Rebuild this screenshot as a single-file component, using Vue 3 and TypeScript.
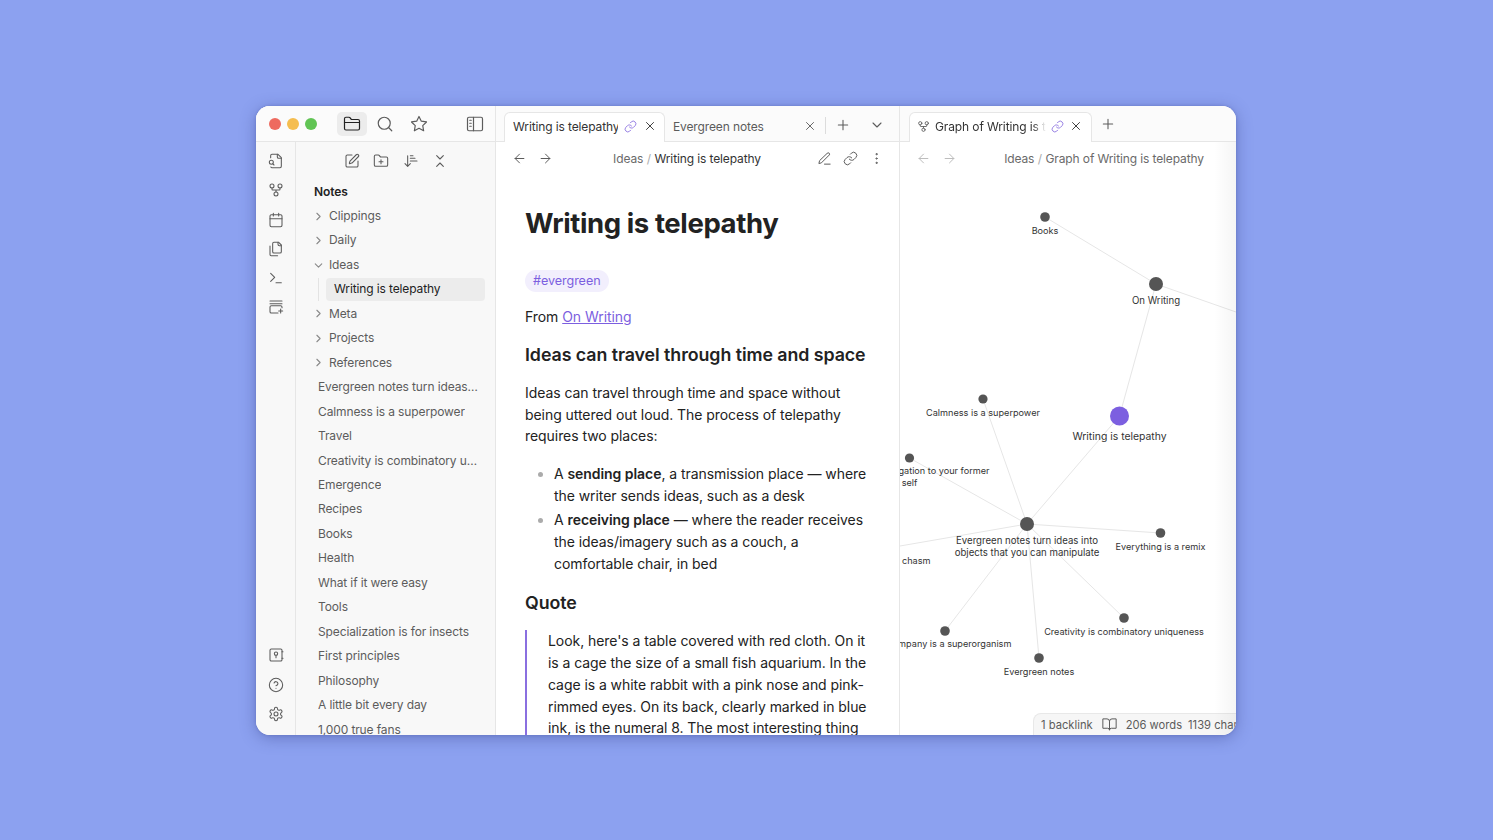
<script setup lang="ts">
const icons: Record<string, string> = {
  folder: '<path d="M4 20h16a2 2 0 0 0 2-2V8a2 2 0 0 0-2-2h-7.93a2 2 0 0 1-1.66-.9l-.82-1.2A2 2 0 0 0 7.93 3H4a2 2 0 0 0-2 2v13c0 1.1.9 2 2 2Z"/><path d="M2 10h20"/>',
  search: '<circle cx="11" cy="11" r="8"/><path d="m21 21-4.3-4.3"/>',
  star: '<polygon points="12 2 15.09 8.26 22 9.27 17 14.14 18.18 21.02 12 17.77 5.82 21.02 7 14.14 2 9.27 8.91 8.26 12 2"/>',
  sidebar: '<rect x="2" y="3" width="20" height="18" rx="2"/><path d="M10 3v18M5 7h2M5 11h2M5 15h2"/>',
  edit: '<path d="M12 3H5a2 2 0 0 0-2 2v14a2 2 0 0 0 2 2h14a2 2 0 0 0 2-2v-7"/><path d="M18.375 2.625a1 1 0 0 1 3 3l-9.013 9.014a2 2 0 0 1-.853.505l-2.873.84a.5.5 0 0 1-.62-.62l.84-2.873a2 2 0 0 1 .506-.852z"/>',
  folderPlus: '<path d="M12 10v6M9 13h6"/><path d="M20 20a2 2 0 0 0 2-2V8a2 2 0 0 0-2-2h-7.9a2 2 0 0 1-1.69-.9L9.6 3.9A2 2 0 0 0 7.93 3H4a2 2 0 0 0-2 2v13a2 2 0 0 0 2 2Z"/>',
  sort: '<path d="m3 16 4 4 4-4M7 20V4M11 4h4M11 8h7M11 12h10"/>',
  collapse: '<path d="m7 20 5-5 5 5M7 4l5 5 5-5"/>',
  fileSearch: '<path d="M14 2v4a2 2 0 0 0 2 2h4"/><path d="M4.268 21a2 2 0 0 0 1.727 1H18a2 2 0 0 0 2-2V7l-5-5H6a2 2 0 0 0-2 2v3"/><path d="m9 18-1.5-1.5"/><circle cx="5" cy="14" r="3"/>',
  graph: '<circle cx="12" cy="18" r="3"/><circle cx="6" cy="6" r="3"/><circle cx="18" cy="6" r="3"/><path d="M18 9v2c0 .6-.4 1-1 1H7c-.6 0-1-.4-1-1V9M12 12v3"/>',
  calendar: '<path d="M8 2v4M16 2v4"/><rect x="3" y="4" width="18" height="18" rx="2"/><path d="M3 10h18"/>',
  files: '<path d="M20 7h-3a2 2 0 0 1-2-2V2"/><path d="M9 18a2 2 0 0 1-2-2V4a2 2 0 0 1 2-2h7l4 4v10a2 2 0 0 1-2 2Z"/><path d="M3 7.6v12.8A1.6 1.6 0 0 0 4.6 22h9.8"/>',
  terminal: '<path d="m4 17 6-6-6-6M12 19h8"/>',
  template: '<path d="M3 3h18M3 7h18M21 13v-1a2 2 0 0 0-2-2H5a2 2 0 0 0-2 2v7a2 2 0 0 0 2 2h10M19 15v6M16 18h6"/>',
  vault: '<rect x="3" y="3" width="18" height="18" rx="2"/><circle cx="12" cy="10" r="2.5"/><path d="M12 12.5V16M21 7h1.5M21 17h1.5"/>',
  help: '<circle cx="12" cy="12" r="10"/><path d="M9.09 9a3 3 0 0 1 5.83 1c0 2-3 3-3 3M12 17h.01"/>',
  settings: '<path d="M12.22 2h-.44a2 2 0 0 0-2 2v.18a2 2 0 0 1-1 1.73l-.43.25a2 2 0 0 1-2 0l-.15-.08a2 2 0 0 0-2.73.73l-.22.38a2 2 0 0 0 .73 2.73l.15.1a2 2 0 0 1 1 1.72v.51a2 2 0 0 1-1 1.74l-.15.09a2 2 0 0 0-.73 2.73l.22.38a2 2 0 0 0 2.73.73l.15-.08a2 2 0 0 1 2 0l.43.25a2 2 0 0 1 1 1.73V20a2 2 0 0 0 2 2h.44a2 2 0 0 0 2-2v-.18a2 2 0 0 1 1-1.73l.43-.25a2 2 0 0 1 2 0l.15.08a2 2 0 0 0 2.73-.73l.22-.39a2 2 0 0 0-.73-2.73l-.15-.08a2 2 0 0 1-1-1.74v-.5a2 2 0 0 1 1-1.74l.15-.09a2 2 0 0 0 .73-2.73l-.22-.38a2 2 0 0 0-2.73-.73l-.15.08a2 2 0 0 1-2 0l-.43-.25a2 2 0 0 1-1-1.73V4a2 2 0 0 0-2-2z"/><circle cx="12" cy="12" r="3"/>',
  link: '<path d="M10 13a5 5 0 0 0 7.54.54l3-3a5 5 0 0 0-7.07-7.07l-1.72 1.71"/><path d="M14 11a5 5 0 0 0-7.54-.54l-3 3a5 5 0 0 0 7.07 7.07l1.71-1.71"/>',
  x: '<path d="M18 6 6 18M6 6l12 12"/>',
  plus: '<path d="M5 12h14M12 5v14"/>',
  down: '<path d="m6 9 6 6 6-6"/>',
  right: '<path d="m9 18 6-6-6-6"/>',
  back: '<path d="M19 12H5M12 19l-7-7 7-7"/>',
  forward: '<path d="M5 12h14M12 5l7 7-7 7"/>',
  pencil: '<path d="M12 21h9"/><path d="M16.5 3.5a2.12 2.12 0 0 1 3 3L7 19l-4 1 1-4Z"/>',
  more: '<circle cx="12" cy="5" r="1"/><circle cx="12" cy="12" r="1"/><circle cx="12" cy="19" r="1"/>',
  book: '<path d="M2 3h6a4 4 0 0 1 4 4v14a3 3 0 0 0-3-3H2zM22 3h-6a4 4 0 0 0-4 4v14a3 3 0 0 1 3-3h7z"/>',
}

const ribbonTop = ["fileSearch", "graph", "calendar", "files", "terminal", "template"]
const ribbonBottom = ["vault", "help", "settings"]
const navActions = ["edit", "folderPlus", "sort", "collapse"]

const foldersBefore = ["Clippings", "Daily"]
const foldersAfter = ["Meta", "Projects", "References"]
const notes = [
  "Evergreen notes turn ideas into objects that you can manipulate",
  "Calmness is a superpower",
  "Travel",
  "Creativity is combinatory uniqueness",
  "Emergence",
  "Recipes",
  "Books",
  "Health",
  "What if it were easy",
  "Tools",
  "Specialization is for insects",
  "First principles",
  "Philosophy",
  "A little bit every day",
  "1,000 true fans",
]

const quote = "Look, here's a table covered with red cloth. On it is a cage the size of a small fish aquarium. In the cage is a white rabbit with a pink nose and pink-rimmed eyes. On its back, clearly marked in blue ink, is the numeral 8. The most interesting thing here isn't even the carrot-munching rabbit."

type GraphNode = { x: number; y: number; r: number; labels: string[]; labelY: number; accent?: boolean; big?: boolean }

const nodes: GraphNode[] = [
  { x: 1045, y: 217, r: 4.8, labels: ["Books"], labelY: 234 },
  { x: 1156, y: 284, r: 7, labels: ["On Writing"], labelY: 303.5, big: true },
  { x: 1119.5, y: 416, r: 9.5, labels: ["Writing is telepathy"], labelY: 439.5, accent: true },
  { x: 983, y: 399, r: 4.6, labels: ["Calmness is a superpower"], labelY: 416 },
  { x: 909.5, y: 458, r: 4.6, labels: ["Writing is a delegation to your former", "self"], labelY: 474 },
  { x: 1027, y: 524, r: 7, labels: ["Evergreen notes turn ideas into", "objects that you can manipulate"], labelY: 544, big: true },
  { x: 1160.5, y: 533, r: 4.8, labels: ["Everything is a remix"], labelY: 550 },
  { x: 945, y: 631, r: 4.8, labels: ["A company is a superorganism"], labelY: 647 },
  { x: 1039, y: 658, r: 4.8, labels: ["Evergreen notes"], labelY: 675 },
  { x: 1124, y: 618, r: 4.8, labels: ["Creativity is combinatory uniqueness"], labelY: 635 },
]

const edges = [
  [1045, 217, 1156, 284],
  [1156, 284, 1236, 312],
  [1156, 284, 1119.5, 416],
  [1119.5, 416, 1027, 524],
  [983, 399, 1027, 524],
  [909.5, 458, 1027, 524],
  [900, 546, 1027, 524],
  [1027, 524, 1160.5, 533],
  [1027, 524, 945, 631],
  [1027, 524, 1039, 658],
  [1027, 524, 1124, 618],
]
</script>

<template>
  <div class="page">
    <div class="window">
      <div class="left">
        <div class="left-head">
          <div class="lights">
            <span class="light red"></span>
            <span class="light yellow"></span>
            <span class="light green"></span>
          </div>
          <button class="head-btn active"><svg class="ic ic-18" viewBox="0 0 24 24" v-html="icons.folder"></svg></button>
          <button class="head-btn"><svg class="ic ic-18" viewBox="0 0 24 24" v-html="icons.search"></svg></button>
          <button class="head-btn"><svg class="ic ic-18" viewBox="0 0 24 24" v-html="icons.star"></svg></button>
          <button class="head-btn last"><svg class="ic ic-18" viewBox="0 0 24 24" v-html="icons.sidebar"></svg></button>
        </div>
        <div class="left-body">
          <nav class="ribbon">
            <div class="ribbon-group">
              <svg v-for="name in ribbonTop" :key="name" class="ic ic-16" viewBox="0 0 24 24" v-html="icons[name]"></svg>
            </div>
            <div class="ribbon-group">
              <svg v-for="name in ribbonBottom" :key="name" class="ic ic-16" viewBox="0 0 24 24" v-html="icons[name]"></svg>
            </div>
          </nav>
          <aside class="files">
            <div class="nav-actions">
              <svg v-for="name in navActions" :key="name" class="ic ic-16" viewBox="0 0 24 24" v-html="icons[name]"></svg>
            </div>
            <div class="vault-name">Notes</div>
            <div v-for="f in foldersBefore" :key="f" class="row folder">
              <svg class="ic chev" viewBox="0 0 24 24" v-html="icons.right"></svg>{{ f }}
            </div>
            <div class="row folder">
              <svg class="ic chev" viewBox="0 0 24 24" v-html="icons.down"></svg>Ideas
            </div>
            <div class="child-wrap">
              <div class="row child">Writing is telepathy</div>
            </div>
            <div v-for="f in foldersAfter" :key="f" class="row folder">
              <svg class="ic chev" viewBox="0 0 24 24" v-html="icons.right"></svg>{{ f }}
            </div>
            <div v-for="n in notes" :key="n" class="row note"><span class="ellipsis">{{ n }}</span></div>
          </aside>
        </div>
      </div>

      <section class="main">
        <div class="tabbar">
          <div class="tab current first">
            <span class="tab-title">Writing is telepathy</span>
            <svg class="ic ic-13 purple" viewBox="0 0 24 24" v-html="icons.link"></svg>
            <svg class="ic ic-14 dark" viewBox="0 0 24 24" v-html="icons.x"></svg>
          </div>
          <div class="tab second">
            <span class="tab-title">Evergreen notes</span>
            <svg class="ic ic-14" viewBox="0 0 24 24" v-html="icons.x"></svg>
          </div>
          <span class="tab-sep"></span>
          <svg class="ic ic-16 tab-plus" viewBox="0 0 24 24" v-html="icons.plus"></svg>
          <svg class="ic ic-16 tab-down" viewBox="0 0 24 24" v-html="icons.down"></svg>
        </div>
        <div class="view-head">
          <svg class="ic ic-15" viewBox="0 0 24 24" v-html="icons.back"></svg>
          <svg class="ic ic-15" viewBox="0 0 24 24" v-html="icons.forward"></svg>
          <div class="crumbs"><span class="crumb-dim">Ideas</span><span class="crumb-sep">/</span><span class="crumb-cur">Writing is telepathy</span></div>
          <svg class="ic ic-15" viewBox="0 0 24 24" v-html="icons.pencil"></svg>
          <svg class="ic ic-15" viewBox="0 0 24 24" v-html="icons.link"></svg>
          <svg class="ic ic-15" viewBox="0 0 24 24" v-html="icons.more"></svg>
        </div>
        <article class="note-body">
          <h1>Writing is telepathy</h1>
          <span class="tag">#evergreen</span>
          <p class="from">From <a>On Writing</a></p>
          <h2>Ideas can travel through time and space</h2>
          <p>Ideas can travel through time and space without being uttered out loud. The process of telepathy requires two places:</p>
          <ul>
            <li>A <b>sending place</b>, a transmission place — where the writer sends ideas, such as a desk</li>
            <li>A <b>receiving place</b> — where the reader receives the ideas/imagery such as a couch, a comfortable chair, in bed</li>
          </ul>
          <h2 class="quote-title">Quote</h2>
          <blockquote>{{ quote }}</blockquote>
        </article>
      </section>

      <section class="graph-pane">
        <div class="tabbar">
          <div class="tab current graph-tab">
            <svg class="ic ic-13" viewBox="0 0 24 24" v-html="icons.graph"></svg>
            <span class="tab-title">Graph of Writing is telepathy</span>
            <svg class="ic ic-13 purple" viewBox="0 0 24 24" v-html="icons.link"></svg>
            <svg class="ic ic-14 dark" viewBox="0 0 24 24" v-html="icons.x"></svg>
          </div>
          <svg class="ic ic-16 graph-plus" viewBox="0 0 24 24" v-html="icons.plus"></svg>
        </div>
        <div class="view-head graph-head">
          <svg class="ic ic-15 faint" viewBox="0 0 24 24" v-html="icons.back"></svg>
          <svg class="ic ic-15 faint" viewBox="0 0 24 24" v-html="icons.forward"></svg>
          <div class="crumbs graph-crumbs"><span class="crumb-dim">Ideas</span><span class="crumb-sep">/</span><span class="crumb-dim">Graph of Writing is telepathy</span></div>
        </div>
        <div class="graph">
          <svg class="graph-svg" viewBox="900 175 336 560">
            <line v-for="(e, i) in edges" :key="i" :x1="e[0]" :y1="e[1]" :x2="e[2]" :y2="e[3]" class="edge" />
            <g v-for="n in nodes" :key="n.labels[0]">
              <circle :cx="n.x" :cy="n.y" :r="n.r" :fill="n.accent ? '#7c5fe0' : '#555555'" />
              <text v-for="(l, i) in n.labels" :key="l" :x="n.x" :y="n.labelY + i * 12" :class="['node-label', { big: n.big, accent: n.accent }]">{{ l }}</text>
            </g>
            <text x="930.5" y="564" class="node-label end">chasm</text>
          </svg>
          <div class="status">
            <span>1 backlink</span>
            <svg class="ic ic-15" viewBox="0 0 24 24" v-html="icons.book"></svg>
            <span>206 words</span>
            <span class="chars">1139 characters</span>
          </div>
        </div>
        <div class="edge-fade"></div>
      </section>
    </div>
  </div>
</template>

<style>
html,
body {
  margin: 0;
  background: #8ca1f0;
}
</style>

<style scoped>
.page {
  width: 1493px;
  height: 840px;
  overflow: hidden;
  display: flex;
  align-items: flex-start;
  justify-content: center;
  padding: 106px 1px 0 0;
  box-sizing: border-box;
  background: #8ca1f0;
  font-family: Inter, "Liberation Sans", sans-serif;
  color: #222;
}

.window {
  width: 980px;
  height: 629px;
  display: flex;
  overflow: hidden;
  border-radius: 14px;
  background: #fff;
  box-shadow: 0 3px 16px rgba(45, 55, 125, 0.38), 0 0 3px rgba(45, 55, 125, 0.25);
}

.ic {
  flex: none;
  fill: none;
  stroke: #5c5c5c;
  stroke-width: 1.6;
  stroke-linecap: round;
  stroke-linejoin: round;
}
.ic-13 { width: 13px; height: 13px; }
.ic-14 { width: 14px; height: 14px; }
.ic-15 { width: 15px; height: 15px; }
.ic-16 { width: 16px; height: 16px; }
.ic-18 { width: 18px; height: 18px; }
.purple { stroke: #8a6fe0; }
.dark { stroke: #333; }
.faint { stroke: #bdbdbd; }

.left {
  width: 240px;
  flex: none;
  display: flex;
  flex-direction: column;
  background: #f8f8f8;
  border-right: 1px solid #e6e6e6;
  box-sizing: border-box;
}

.left-head {
  height: 36px;
  flex: none;
  display: flex;
  align-items: center;
  padding-left: 13px;
  border-bottom: 1px solid #e6e6e6;
  box-sizing: border-box;
  background: #fbfbfb;
}

.lights {
  display: flex;
  gap: 6px;
  width: 68px;
}
.light {
  width: 12px;
  height: 12px;
  border-radius: 50%;
}
.red { background: #ee6a5f; }
.yellow { background: #f5bd4f; }
.green { background: #61c454; }

.head-btn {
  width: 30px;
  height: 24px;
  margin-right: 4px;
  padding: 0;
  border: 0;
  border-radius: 5px;
  background: none;
  display: flex;
  align-items: center;
  justify-content: center;
}
.head-btn.active {
  background: #ececec;
  margin-right: 3px;
}
.head-btn.active .ic { stroke: #222; }
.head-btn.last { margin-left: auto; margin-right: 5px; }

.left-body {
  flex: 1;
  min-height: 0;
  display: flex;
}

.ribbon {
  width: 40px;
  flex: none;
  box-sizing: border-box;
  border-right: 1px solid #e6e6e6;
  padding: 11px 0 13px;
  display: flex;
  flex-direction: column;
  justify-content: space-between;
  align-items: center;
}
.ribbon-group {
  display: flex;
  flex-direction: column;
  gap: 13.3px;
}

.files {
  flex: 1;
  min-width: 0;
  overflow: hidden;
  padding: 0 10px 0 0;
  font-size: 12px;
  letter-spacing: -0.12px;
  color: #5c5c5c;
}

.nav-actions {
  display: flex;
  justify-content: center;
  gap: 13.3px;
  padding: 11px 0 0 11px;
  height: 27px;
  margin-bottom: 4px;
}

.vault-name {
  height: 16px;
  line-height: 16px;
  padding-left: 18px;
  margin-bottom: 3.9px;
  font-weight: 600;
  color: #222;
}

.row {
  height: 24.47px;
  line-height: 24.47px;
  display: flex;
  align-items: center;
  white-space: nowrap;
}
.folder { padding-left: 17px; }
.chev {
  width: 13px;
  height: 13px;
  margin-right: 4px;
  margin-left: -1px;
  stroke: #8a8a8a;
  stroke-width: 2;
}
.note { padding-left: 22px; }
.ellipsis {
  display: block;
  max-width: 161px;
  overflow: hidden;
  text-overflow: ellipsis;
}

.child-wrap {
  margin-left: 22px;
  padding-left: 7px;
  border-left: 1px solid #e3e3e3;
}
.child {
  height: 23px;
  margin: 0.73px 0;
  padding-left: 8px;
  border-radius: 4px;
  background: #ececec;
  color: #222;
}

.main {
  width: 404px;
  flex: none;
  display: flex;
  flex-direction: column;
  border-right: 1px solid #e6e6e6;
  box-sizing: border-box;
  min-height: 0;
}

.tabbar {
  height: 36px;
  flex: none;
  display: flex;
  align-items: flex-end;
  padding-left: 8px;
  background: #fbfbfb;
  border-bottom: 1px solid #e6e6e6;
  box-sizing: border-box;
  font-size: 12px;
  letter-spacing: -0.12px;
  color: #5c5c5c;
}

.tab {
  height: 27px;
  display: flex;
  align-items: center;
  box-sizing: border-box;
  white-space: nowrap;
  padding-bottom: 2px;
}
.tab.current {
  position: relative;
  top: 1px;
  height: 30px;
  background: #fff;
  border: 1px solid #e6e6e6;
  border-bottom: 0;
  border-radius: 6px 6px 0 0;
  color: #333;
}
.tab-title {
  overflow: hidden;
  white-space: nowrap;
}

.first {
  width: 161px;
  padding: 0 7px 3px 8px;
  gap: 6px;
}
.first .tab-title { width: 106px; }

.second {
  width: 160px;
  padding: 0 8px 0;
  justify-content: space-between;
  height: 30px;
}

.tab-sep {
  width: 1px;
  height: 17px;
  margin: 0 0 7px 0;
  background: #dcdcdc;
}
.tab-plus { margin: 0 0 8px 9px; }
.tab-down { margin: 0 0 8px 18px; }

.graph-pane .tabbar { padding-left: 9px; }
.graph-tab {
  width: 183px;
  padding: 0 7px 3px 7px;
  gap: 5px;
}
.graph-tab .tab-title {
  width: 111px;
  -webkit-mask-image: linear-gradient(to right, #000 88%, transparent);
  mask-image: linear-gradient(to right, #000 88%, transparent);
}
.graph-plus { margin: 0 0 9px 8px; }

.view-head {
  height: 33px;
  flex: none;
  display: flex;
  align-items: center;
  gap: 11px;
  padding: 0 15px 0 16px;
  font-size: 12px;
  letter-spacing: -0.12px;
}
.crumbs {
  flex: 1;
  display: flex;
  justify-content: center;
  gap: 3.5px;
  white-space: nowrap;
  padding-left: 4px;
}
.crumb-dim { color: #6a6a6a; }
.crumb-sep { color: #ababab; }
.crumb-cur { color: #333; }
.graph-crumbs { padding-left: 36px; }
.graph-head { padding-right: 32px; }

.note-body {
  flex: 1;
  min-height: 0;
  overflow: hidden;
  padding: 0 29px;
  font-size: 14px;
  letter-spacing: -0.06px;
  line-height: 21.75px;
  color: #222;
}

h1 {
  margin: 31px 0 0;
  font-size: 27.5px;
  line-height: 34px;
  font-weight: 700;
  letter-spacing: -0.4px;
}

.tag {
  display: inline-block;
  margin-top: 30px;
  padding: 0 8px;
  height: 22px;
  line-height: 22px;
  font-size: 12.6px;
  border-radius: 11px;
  background: #f2effd;
  color: #7c5fe0;
}

p { margin: 0; }
.from { margin-top: 13.5px; }
a {
  color: #7c5fe0;
  text-decoration: underline;
}

h2 {
  margin: 16px 0 14.5px;
  font-size: 17.8px;
  line-height: 24px;
  font-weight: 600;
  white-space: nowrap;
}

ul {
  margin: 16px 0 0;
  padding-left: 29px;
}
li { margin-bottom: 2.5px; }
li::marker { color: #ababab; }
b { font-weight: 600; }

.quote-title { margin: 17px 0 15px; }

blockquote {
  margin: 0;
  padding-left: 21px;
  border-left: 2px solid #8a6fe0;
}

.graph-pane {
  flex: 1;
  min-width: 0;
  display: flex;
  flex-direction: column;
  position: relative;
}

.graph {
  flex: 1;
  min-height: 0;
  position: relative;
  overflow: hidden;
}
.graph-svg {
  display: block;
  width: 336px;
  height: 560px;
}
.edge {
  stroke: #e6e6e6;
  stroke-width: 1;
}
.node-label {
  font-size: 9.15px;
  text-anchor: middle;
  fill: #333;
}
.node-label.big { font-size: 9.65px; }
.node-label.accent { font-size: 10.4px; }
.node-label.end { text-anchor: end; }

.edge-fade {
  position: absolute;
  top: 36px;
  right: 0;
  bottom: 0;
  width: 22px;
  background: linear-gradient(to right, rgba(0, 0, 0, 0), rgba(0, 0, 0, 0.04));
}

.status {
  position: absolute;
  left: 133px;
  bottom: 0;
  height: 22px;
  width: 240px;
  display: flex;
  align-items: center;
  gap: 9px;
  padding-left: 7px;
  box-sizing: border-box;
  background: #f6f6f6;
  border: 1px solid #e8e8e8;
  border-bottom: 0;
  border-radius: 8px 0 0 0;
  font-size: 11.2px;
  color: #5c5c5c;
  white-space: nowrap;
}
.chars { margin-left: -3px; }
</style>
